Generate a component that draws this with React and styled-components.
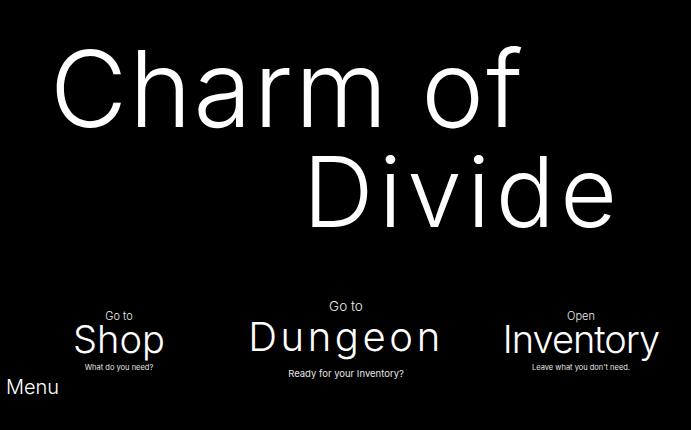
import React from 'react';
import styled, { createGlobalStyle } from 'styled-components';

const GlobalStyle = createGlobalStyle`
    html, body {
        margin: 0;
        padding: 0;
        background: #000;
    }
    body {
        font-family: Inter, "Noto Sans", "DejaVu Sans", sans-serif;
        color: #fff;
    }
`;

const menuItems = [
    { key: 'shop', pre: 'Go to', title: 'Shop', sub: 'What do you need?', preSize: 11, subSize: 7.5, size: 38, spacing: 0, padTop: 13.5, gapPre: -1.5, gapSub: 5.5 },
    { key: 'dungeon', pre: 'Go to', title: 'Dungeon', sub: 'Ready for your Inventory?', preSize: 13.5, subSize: 9.5, size: 40, spacing: 3.6, padTop: 3, gapPre: 3, gapSub: 12.5 },
    { key: 'inventory', pre: 'Open', title: 'Inventory', sub: "Leave what you don't need.", preSize: 11, subSize: 7.5, size: 38, spacing: -1, padTop: 13.5, gapPre: -1.5, gapSub: 6 },
];

function App() {
    return (
        <>
            <GlobalStyle />
            <Screen>
                <Title>
                    <TitleLine $size={106} $indent={50} $spacing={2}>Charm of</TitleLine>
                    <TitleLine $size={98} $indent={303} $spacing={5.5} $gap={1}>Divide</TitleLine>
                </Title>

                <MenuRow>
                    {menuItems.map((item) => (
                        <MenuItem key={item.key} $padTop={item.padTop} $shift={item.key === 'inventory' ? 17 : 0}>
                            <PreLabel $size={item.preSize}>{item.pre}</PreLabel>
                            <ItemTitle $size={item.size} $spacing={item.spacing} $gap={item.gapPre}>{item.title}</ItemTitle>
                            <SubLabel $size={item.subSize} $gap={item.gapSub}>{item.sub}</SubLabel>
                        </MenuItem>
                    ))}
                </MenuRow>

                <MenuButton>Menu</MenuButton>
            </Screen>
        </>
    );
}

const Screen = styled.div`
    width: 100%;
    height: 100vh;
    overflow: hidden;
    background: #000;
    display: flex;
    flex-direction: column;
`

const Title = styled.h1`
    margin: 0;
    padding-top: 36px;
    font-weight: 300;
    display: flex;
    flex-direction: column;
`

const TitleLine = styled.span`
    display: block;
    font-size: ${(p) => p.$size}px;
    line-height: 1;
    letter-spacing: ${(p) => p.$spacing}px;
    margin-left: ${(p) => p.$indent}px;
    margin-top: ${(p) => p.$gap || 0}px;
    white-space: nowrap;
`

const MenuRow = styled.nav`
    margin-top: 56px;
    display: grid;
    grid-template-columns: 238px 216px 1fr;
    align-items: start;
`

const MenuItem = styled.div`
    display: flex;
    flex-direction: column;
    align-items: center;
    padding-top: ${(p) => p.$padTop}px;
    padding-left: ${(p) => p.$shift}px;
    cursor: pointer;
`

const PreLabel = styled.div`
    font-size: ${(p) => p.$size}px;
    line-height: 1;
    font-weight: 300;
    color: #ececec;
`

const ItemTitle = styled.div`
    font-size: ${(p) => p.$size}px;
    line-height: 1;
    font-weight: 300;
    letter-spacing: ${(p) => p.$spacing}px;
    margin-top: ${(p) => p.$gap}px;
`

const SubLabel = styled.div`
    font-size: ${(p) => p.$size}px;
    line-height: 1;
    font-weight: 400;
    color: #e6e6e6;
    margin-top: ${(p) => p.$gap}px;
    white-space: nowrap;
`

const MenuButton = styled.div`
    margin-top: -2px;
    padding-left: 6px;
    font-size: 20px;
    line-height: 1;
    font-weight: 300;
`

export default App;
